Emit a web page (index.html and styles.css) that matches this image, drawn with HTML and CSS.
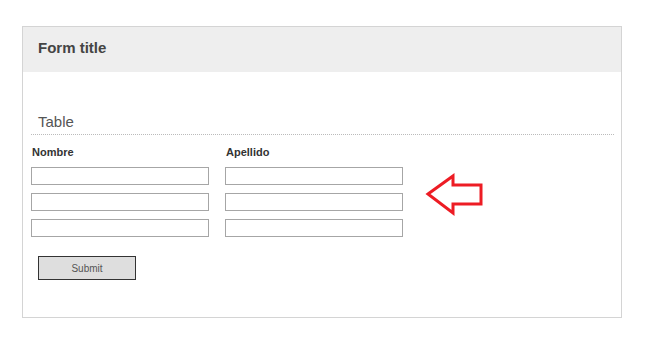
FILE: index.html
```html
<!DOCTYPE html>
<html lang="en">
<head>
    <meta charset="UTF-8">
    <meta name="viewport" content="width=device-width, initial-scale=1.0">
    <title>Form title</title>
    <link rel="stylesheet" href="styles.css">
</head>
<body>
    <!-- Form card -->
    <div class="card">
        <div class="card-header">Form title</div>
        <div class="card-body">
            <div class="legend">Table</div>
            <div class="table-grid">
                <label class="col-label">Nombre</label>
                <label class="col-label">Apellido</label>
                <input type="text" class="field">
                <input type="text" class="field">
                <input type="text" class="field">
                <input type="text" class="field">
                <input type="text" class="field">
                <input type="text" class="field">
            </div>
            <button class="submit-btn">Submit</button>
        </div>

        <!-- Annotation arrow -->
        <svg class="arrow" width="70" height="52" viewBox="0 0 70 52">
            <polygon points="7,25 32,7 32,16 60,16 60,35 32,35 32,44" fill="none" stroke="#ed1c24" stroke-width="3" stroke-linejoin="miter"/>
        </svg>
    </div>
</body>
</html>
```

FILE: styles.css
```css
/* Basic reset */
body {
    margin: 0;
    padding: 26px 0 0 22px;
    background-color: #fff;
    font-family: "Liberation Sans", Arial, sans-serif;
}

/* Card */
.card {
    position: relative;
    width: 600px;
    box-sizing: border-box;
    border: 1px solid #d4d4d4;
    background-color: #fff;
}

.card-header {
    height: 45px;
    line-height: 42px;
    padding-left: 15px;
    background-color: #eeeeee;
    font-size: 15px;
    font-weight: bold;
    color: #444;
}

.card-body {
    padding: 0 7px 37px 8px;
}

/* Section title with dotted line */
.legend {
    margin-top: 41px;
    padding: 0 0 4px 7px;
    font-size: 15px;
    line-height: 17px;
    color: #555;
    border-bottom: 1px dotted #bbb;
}

/* Inputs table */
.table-grid {
    display: grid;
    grid-template-columns: 178px 178px;
    column-gap: 16px;
    row-gap: 8px;
    margin-top: 11px;
}

.col-label {
    font-size: 11px;
    line-height: 13px;
    font-weight: bold;
    color: #333;
    padding-left: 1px;
}

.field {
    box-sizing: border-box;
    width: 178px;
    height: 18px;
    margin: 0;
    padding: 0 3px;
    border: 1px solid #a6a6a6;
    background-color: #fff;
    font-size: 11px;
}

.submit-btn {
    display: block;
    box-sizing: border-box;
    width: 98px;
    height: 24px;
    margin: 19px 0 0 7px;
    padding: 0;
    border: 1px solid #333;
    background-color: #dedede;
    font-family: "Liberation Sans", Arial, sans-serif;
    font-size: 10px;
    color: #555;
}

/* Red arrow annotation */
.arrow {
    position: absolute;
    left: 398px;
    top: 142px;
}
```
